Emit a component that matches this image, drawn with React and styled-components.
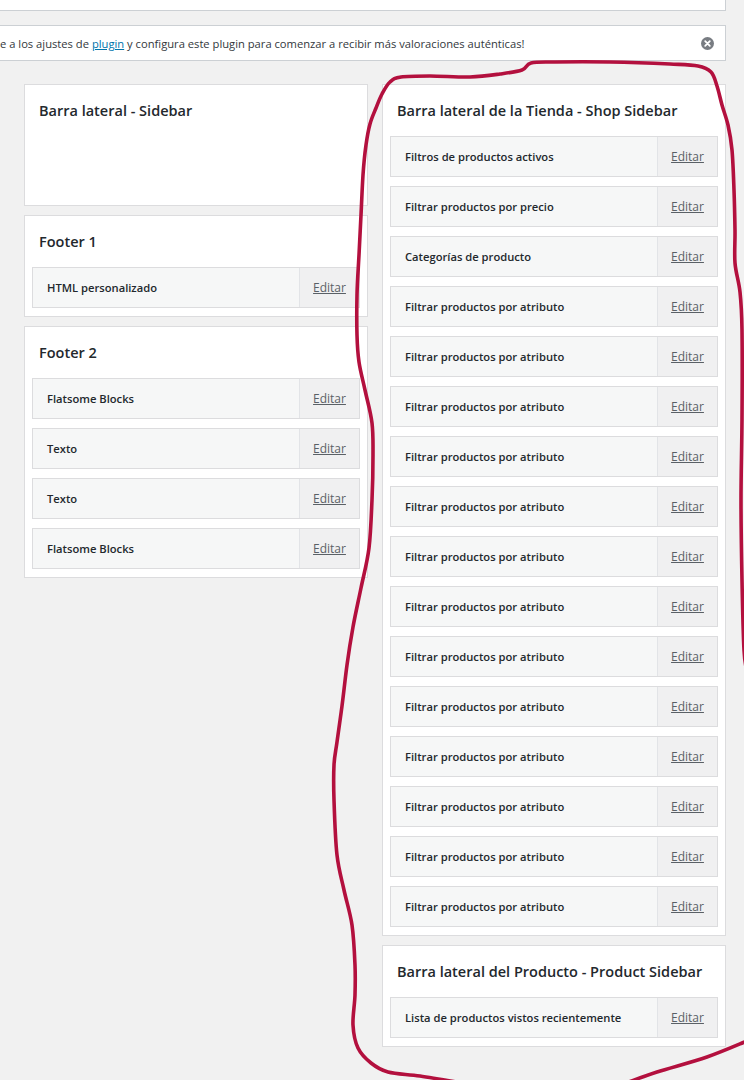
import React from "react";
import styled, { createGlobalStyle } from "styled-components";

const GlobalStyle = createGlobalStyle`
  html, body {
    margin: 0;
    padding: 0;
    background: #f1f1f1;
  }
  body {
    font-family: "Open Sans", "Noto Sans", sans-serif;
    color: #23282d;
  }
`;

const Page = styled.div`
  position: relative;
  width: 744px;
  min-height: 1080px;
  overflow: hidden;
`;

const TopStrip = styled.div`
  width: 725px;
  height: 10px;
  background: #fff;
  border: 1px solid #ccd0d4;
  border-top: none;
  border-left: none;
`;

const Notice = styled.div`
  display: flex;
  align-items: center;
  justify-content: space-between;
  box-sizing: border-box;
  width: 726px;
  height: 36px;
  margin-top: 14px;
  padding-right: 11px;
  background: #fff;
  border: 1px solid #ccd0d4;
  border-left: none;
`;

const NoticeText = styled.p`
  margin: 0;
  font-size: 11.2px;
  white-space: nowrap;
  color: #32373c;
`;

const NoticeLink = styled.a`
  color: #0073aa;
  text-decoration: underline;
`;

const Dismiss = styled.button`
  display: flex;
  padding: 0;
  border: none;
  background: none;
  cursor: pointer;
`;

const Columns = styled.div`
  display: grid;
  grid-template-columns: 344px 344px;
  column-gap: 14px;
  align-items: start;
  margin-top: 23px;
  padding-left: 24px;
`;

const Column = styled.div`
  display: flex;
  flex-direction: column;
  gap: 9px;
`;

const Panel = styled.section`
  box-sizing: border-box;
  min-height: ${props => props.$minHeight || 0}px;
  padding-bottom: 8px;
  background: #fff;
  border: 1px solid #dcdcde;
`;

const PanelTitle = styled.h2`
  margin: 0;
  padding: 16px 14px 15px;
  font-size: 14.5px;
  line-height: 20px;
  font-weight: 600;
  color: #23282d;
`;

const WidgetList = styled.div`
  display: flex;
  flex-direction: column;
  gap: 9px;
  padding: 0 7px;
`;

const WidgetRow = styled.div`
  display: flex;
  box-sizing: border-box;
  height: 41px;
  background: #f6f7f7;
  border: 1px solid #dcdcde;
`;

const WidgetName = styled.span`
  flex: 1;
  display: flex;
  align-items: center;
  padding-left: 14px;
  font-size: 11.2px;
  font-weight: 600;
  color: #23282d;
`;

const EditCell = styled.div`
  display: flex;
  align-items: center;
  justify-content: center;
  width: 59px;
  background: #f0f0f1;
  border-left: 1px solid #e2e4e7;
`;

const EditLink = styled.a`
  font-size: 12px;
  color: #5a6066;
  text-decoration: underline;
  cursor: pointer;
`;

const Scribble = styled.svg`
  position: absolute;
  top: 0;
  left: 0;
  pointer-events: none;
`;

const LOOP = [
  [747, 672], [744, 650], [742, 580], [741, 500], [742, 420], [742, 330],
  [740, 292], [735, 263], [735, 230], [734, 190], [732, 150], [728, 125],
  [722, 105], [717, 86], [711, 72], [698, 66], [670, 64], [610, 62],
  [555, 62], [531, 63], [522, 70], [500, 74], [470, 77], [430, 76],
  [401, 77], [390, 82], [382, 94], [376, 108], [370, 124], [366, 145],
  [363, 175], [361, 215], [359, 255], [357, 295], [357, 335], [359, 362],
  [365, 390], [372, 423], [373, 455], [372, 500], [369, 548], [361, 588],
  [353, 627], [347, 665], [342, 706], [337, 742], [334, 765], [334, 800],
  [337, 855], [344, 890], [352, 925], [355, 965], [355, 995], [353, 1025],
  [358, 1048], [371, 1063], [388, 1072], [420, 1076], [462, 1083],
];

const TAIL = [[626, 1083], [657, 1072], [707, 1057], [747, 1041]];

function smoothPath(points) {
  let d = `M ${points[0][0]} ${points[0][1]}`;
  for (let i = 0; i < points.length - 1; i++) {
    const p0 = points[i - 1] || points[i];
    const p1 = points[i];
    const p2 = points[i + 1];
    const p3 = points[i + 2] || p2;
    const c1x = p1[0] + (p2[0] - p0[0]) / 6;
    const c1y = p1[1] + (p2[1] - p0[1]) / 6;
    const c2x = p2[0] - (p3[0] - p1[0]) / 6;
    const c2y = p2[1] - (p3[1] - p1[1]) / 6;
    d += ` C ${c1x.toFixed(1)} ${c1y.toFixed(1)} ${c2x.toFixed(1)} ${c2y.toFixed(1)} ${p2[0]} ${p2[1]}`;
  }
  return d;
}

const leftPanels = [
  { title: "Barra lateral - Sidebar", widgets: [], minHeight: 122 },
  { title: "Footer 1", widgets: ["HTML personalizado"] },
  {
    title: "Footer 2",
    widgets: ["Flatsome Blocks", "Texto", "Texto", "Flatsome Blocks"],
  },
];

const rightPanels = [
  {
    title: "Barra lateral de la Tienda - Shop Sidebar",
    widgets: [
      "Filtros de productos activos",
      "Filtrar productos por precio",
      "Categorías de producto",
      ...Array(13).fill("Filtrar productos por atributo"),
    ],
  },
  {
    title: "Barra lateral del Producto - Product Sidebar",
    widgets: ["Lista de productos vistos recientemente"],
  },
];

function CloseIcon() {
  return (
    <svg width="13" height="13" viewBox="0 0 13 13">
      <circle cx="6.5" cy="6.5" r="6.5" fill="#787c82" />
      <path
        d="M4.2 4.2 L8.8 8.8 M8.8 4.2 L4.2 8.8"
        stroke="#fff"
        strokeWidth="1.8"
        strokeLinecap="round"
      />
    </svg>
  );
}

function SidebarPanel({ panel }) {
  return (
    <Panel $minHeight={panel.minHeight}>
      <PanelTitle>{panel.title}</PanelTitle>
      {panel.widgets.length > 0 && (
        <WidgetList>
          {panel.widgets.map((name, i) => (
            <WidgetRow key={i}>
              <WidgetName>{name}</WidgetName>
              <EditCell>
                <EditLink>Editar</EditLink>
              </EditCell>
            </WidgetRow>
          ))}
        </WidgetList>
      )}
    </Panel>
  );
}

function App() {
  return (
    <Page>
      <GlobalStyle />
      <TopStrip />
      <Notice>
        <NoticeText>
          e a los ajustes de <NoticeLink>plugin</NoticeLink> y configura este
          plugin para comenzar a recibir más valoraciones auténticas!
        </NoticeText>
        <Dismiss aria-label="Descartar">
          <CloseIcon />
        </Dismiss>
      </Notice>
      <Columns>
        <Column>
          {leftPanels.map((panel, i) => (
            <SidebarPanel key={i} panel={panel} />
          ))}
        </Column>
        <Column>
          {rightPanels.map((panel, i) => (
            <SidebarPanel key={i} panel={panel} />
          ))}
        </Column>
      </Columns>
      <Scribble width="744" height="1080" viewBox="0 0 744 1080">
        <g
          fill="none"
          stroke="#b3103e"
          strokeWidth="3.6"
          strokeLinecap="round"
          strokeLinejoin="round"
        >
          <path d={smoothPath(LOOP)} />
          <path d={smoothPath(TAIL)} />
        </g>
      </Scribble>
    </Page>
  );
}

export default App;
